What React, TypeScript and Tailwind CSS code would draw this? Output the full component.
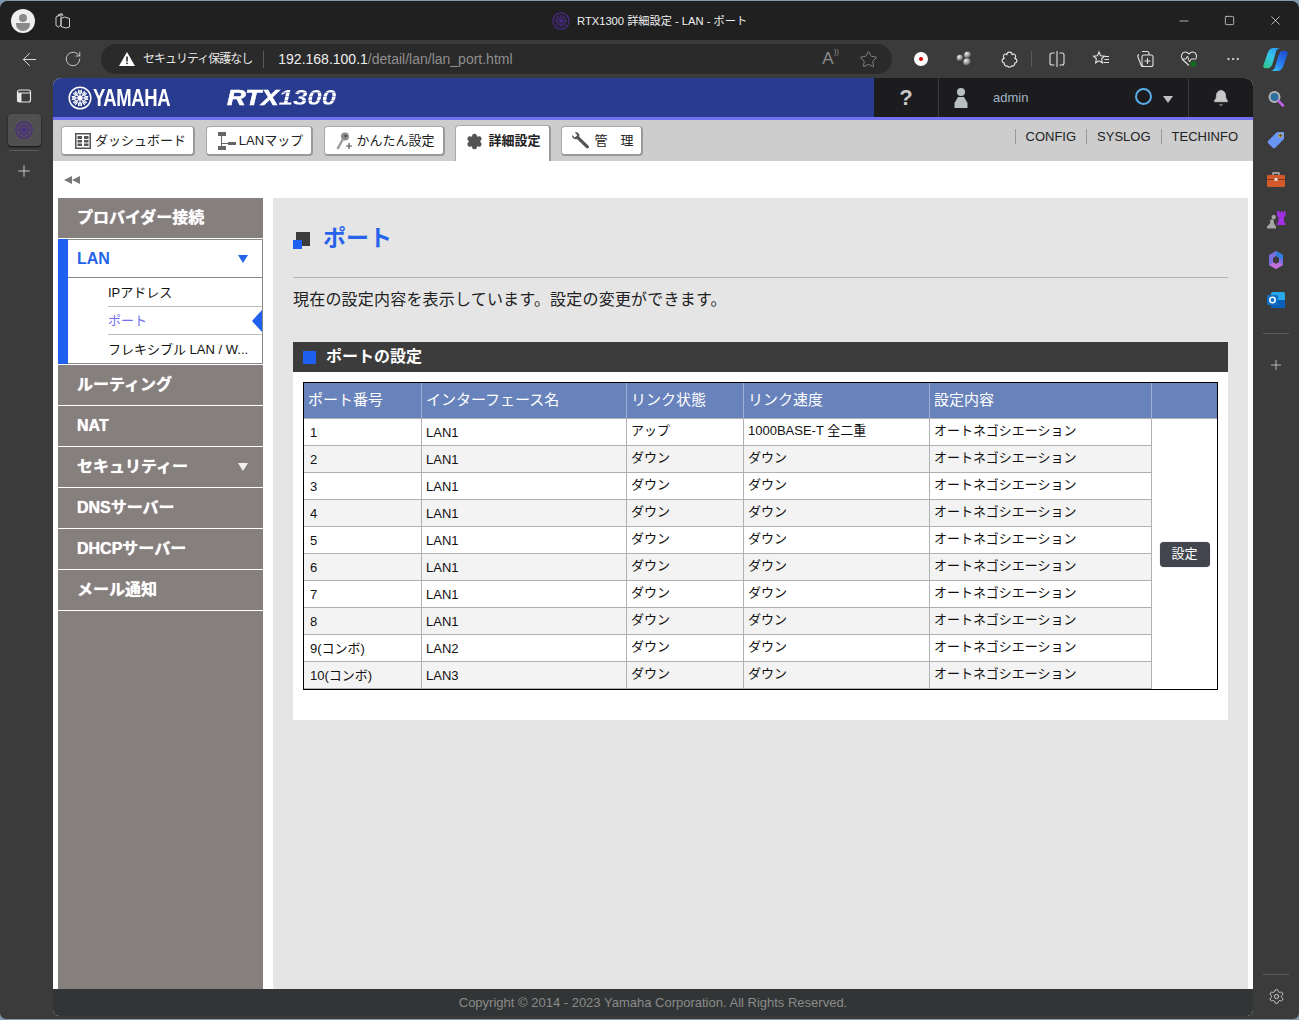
import React from "react";
import {
  ArrowLeft, RotateCw, Star, Plus, Minus, Square, X, MoreHorizontal, Settings, Bell,
} from "lucide-react";

const JP = "font-['Liberation_Sans','Noto_Sans_CJK_JP',sans-serif]";

function YamahaMark({ size = 24, color = "#fff" }: { size?: number; color?: string }) {
  const spokes = [0, 45, 90, 135, 180, 225, 270, 315];
  return (
    <svg width={size} height={size} viewBox="0 0 24 24" fill="none" className="shrink-0">
      <circle cx="12" cy="12" r="10.800" stroke={color} strokeWidth="1.500" />
      {spokes.map((a) => (
        <g key={a} transform={`rotate(${a} 12 12)`}>
          <path d="M12 10V4M10.600 3.800v2.600c0 .7.6 1.100 1.400 1.100s1.400-.4 1.400-1.100V3.800" stroke={color} strokeWidth="1.100" />
        </g>
      ))}
      <circle cx="12" cy="12" r="2.400" fill={color} />
    </svg>
  );
}

function NavButton({ icon, label, w, active }: { icon: React.ReactNode; label: string; w: string; active?: boolean }) {
  return (
    <div
      className={`${w} flex items-center justify-center gap-[3px] bg-white border border-[#a9a9a9] text-[13px] text-[#222] ${
        active
          ? "h-[36px] mt-[5px] pb-[5px] rounded-t-[4px] border-b-0 border-r-2 border-r-[#9a9a9a] font-bold"
          : "h-[30px] mt-[6px] rounded-[4px] border-r-2 border-b-2 border-r-[#9a9a9a] border-b-[#9a9a9a]"
      }`}
    >
      {icon}
      <span className="whitespace-pre">{label}</span>
    </div>
  );
}

function GridIcon() {
  return (
    <svg width="16" height="16" viewBox="0 0 16 16" fill="none" className="mr-[1px]">
      <rect x="0.750" y="0.750" width="14.500" height="14.500" stroke="#555" strokeWidth="1.500" fill="#fff" />
      <rect x="2.500" y="3" width="4.500" height="3" fill="#555" />
      <rect x="9" y="3" width="4.500" height="3" fill="#555" />
      <rect x="2.500" y="7" width="4.500" height="2.500" fill="#555" />
      <rect x="9" y="7" width="4.500" height="2.500" fill="#555" />
      <rect x="2.500" y="10.500" width="4.500" height="2.500" fill="#555" />
      <rect x="9" y="10.500" width="4.500" height="2.500" fill="#555" />
    </svg>
  );
}
function MapIcon() {
  return (
    <svg width="18" height="20" viewBox="0 0 18 20" fill="none">
      <rect x="0" y="1" width="8" height="4" fill="#666" />
      <rect x="0" y="15" width="8" height="4" fill="#666" />
      <rect x="10" y="11" width="8" height="3" fill="#666" />
      <path d="M3.500 5v10M3.500 12.500h6.500" stroke="#666" />
    </svg>
  );
}
function WandIcon() {
  return (
    <svg width="20" height="20" viewBox="0 0 20 20" fill="none" className="-mr-[2px]">
      <circle cx="10" cy="5.500" r="4" fill="#8a8a8a" />
      <circle cx="10.500" cy="5" r="1.200" fill="#444" />
      <path d="M8 8L2.500 18" stroke="#9a9a9a" strokeWidth="2.400" />
      <path d="M14 12v6M11 15h6" stroke="#555" strokeWidth="1.200" />
    </svg>
  );
}
function GearIcon() {
  return <Settings size={17} fill="#555" stroke="#555" strokeWidth={2.200} className="mr-[2px]" />;
}
function WrenchIcon() {
  return (
    <svg width="19" height="19" viewBox="0 0 18 18" fill="none" className="mr-[1px]">
      <path d="M1 3.800L3.600 6.200 6 4 3.600 1.400C5.600.4 8 1.800 8 4.200c0 .5 0 .8-.2 1.200L16.600 14c.6.7.6 1.600 0 2.200s-1.600.6-2.200 0L5.600 7.600C3.200 8.400.6 6.400 1 3.800z" fill="#555" />
    </svg>
  );
}

function SideItem({ label, caret }: { label: string; caret?: boolean }) {
  return (
    <div className="h-[41px] bg-[#857f7d] border-b border-white flex items-center pl-[19px] pr-[15px] text-white font-bold text-[16px] [text-shadow:0_0_1px_#fff]">
      <span className="flex-1">{label}</span>
      {caret && <span className="w-0 h-0 border-x-[5px] border-x-transparent border-t-[8px] border-t-[#f0f0f0]" />}
    </div>
  );
}

const rows: [string, string, string, string][] = [
  ["1", "LAN1", "アップ", "1000BASE-T 全二重"],
  ["2", "LAN1", "ダウン", "ダウン"],
  ["3", "LAN1", "ダウン", "ダウン"],
  ["4", "LAN1", "ダウン", "ダウン"],
  ["5", "LAN1", "ダウン", "ダウン"],
  ["6", "LAN1", "ダウン", "ダウン"],
  ["7", "LAN1", "ダウン", "ダウン"],
  ["8", "LAN1", "ダウン", "ダウン"],
  ["9(コンボ)", "LAN2", "ダウン", "ダウン"],
  ["10(コンボ)", "LAN3", "ダウン", "ダウン"],
];

function PortTable() {
  const th = "h-[36px] px-[4px] text-left font-normal text-[15px] text-white border-r border-b border-r-[#9fb0d4] border-b-[#b0b0b0] bg-[#6882bb]";
  const td = "h-[27px] p-0 pl-[4px] text-[13px] text-[#111] border-r border-b border-[#b0b0b0]";
  return (
    <div className="w-[915px] border border-black">
      <table className="w-[913px] border-separate border-spacing-0 table-fixed">
        <colgroup>
          <col className="w-[118px]" />
          <col className="w-[205px]" />
          <col className="w-[117px]" />
          <col className="w-[186px]" />
          <col className="w-[222px]" />
          <col />
        </colgroup>
        <thead>
          <tr>
            <th className={th}>ポート番号</th>
            <th className={th}>インターフェース名</th>
            <th className={th}>リンク状態</th>
            <th className={th}>リンク速度</th>
            <th className={th}>設定内容</th>
            <th className="bg-[#6882bb] border-b border-[#b0b0b0]" />
          </tr>
        </thead>
        <tbody>
          {rows.map((r, i) => (
            <tr key={i} className={i % 2 ? "bg-[#f3f3f3]" : "bg-white"}>
              <td className={td + " pl-[6px] pt-[2px]"}>{r[0]}</td>
              <td className={td + " pt-[2px]"}>{r[1]}</td>
              <td className={td + " pb-[2px]"}>{r[2]}</td>
              <td className={td + " pb-[2px]"}>{r[3]}</td>
              <td className={td + " pb-[2px]"}>オートネゴシエーション</td>
              {i === 0 && (
                <td rowSpan={10} className="bg-white text-center align-middle">
                  <button className="w-[50px] h-[25px] rounded-[4px] bg-[#42444e] text-white text-[13px] shadow-[0_0_1px_#888]">設定</button>
                </td>
              )}
            </tr>
          ))}
        </tbody>
      </table>
    </div>
  );
}

function CopilotLogo() {
  const ribbon = "M10.500 1h6.500c-2.200 0-3.800 1.300-4.500 3.500L9 16.500C8.200 19 6.500 20.500 4 20.500H2.800C1 20.500-.2 19 .4 17.200L4.800 5C5.700 2.500 7.800 1 10.500 1z";
  return (
    <svg width="25" height="25" viewBox="0 0 24 24">
      <defs>
        <linearGradient id="cpA" x1="0.8" y1="0" x2="0.2" y2="1"><stop offset="0" stopColor="#2a9df4" /><stop offset="0.5" stopColor="#35c8e8" /><stop offset="1" stopColor="#2fc48a" /></linearGradient>
        <linearGradient id="cpB" x1="0.2" y1="1" x2="0.8" y2="0"><stop offset="0" stopColor="#1d4fd0" /><stop offset="0.6" stopColor="#2a7ff0" /><stop offset="1" stopColor="#38c6f5" /></linearGradient>
      </defs>
      <path d={ribbon} fill="url(#cpA)" />
      <path d={ribbon} fill="url(#cpB)" transform="rotate(180 12 12)" />
    </svg>
  );
}

function Slot({ children, className = "w-[44px]" }: { children: React.ReactNode; className?: string }) {
  return <div className={`${className} shrink-0 flex items-center justify-center`}>{children}</div>;
}

export default function App() {
  return (
    <div className={`${JP} w-[1299px] h-[1020px] bg-[#7f98b0] overflow-hidden`}>
      <div className="w-[1299px] h-[1018px] mt-px rounded-t-[8px] rounded-b-[6px] overflow-hidden bg-[#3b3b3b] flex flex-col">
        {/* title bar */}
        <div className="h-[39px] bg-[#202020] flex items-center relative shrink-0">
          <div className="ml-[11px] w-[24px] h-[24px] rounded-full bg-[#eeeeee] overflow-hidden flex flex-col items-center">
            <span className="w-[8px] h-[8px] mt-[5px] rounded-full bg-[#8a8a8a]" />
            <span className="w-[14px] h-[8px] mt-[1px] rounded-b-[7px] bg-[#8a8a8a]" />
          </div>
          <svg width="18" height="18" viewBox="0 0 18 18" fill="none" stroke="#cfcfcf" strokeWidth="1" className="ml-[19px]">
            <path d="M4 4.500V3l4-1.500 1 2.500" />
            <path d="M2 5l5-2.500v10.500l-2.500 2-2.500-1.500z" />
            <path d="M7 6.500l3.500-1.500 5 1.500v8.500l-3.500 1-5-1.500z" />
          </svg>
          <div className="absolute left-[552px] top-[11px] flex items-center gap-[7px] text-[11.200px] text-[#f0f0f0]">
            <YamahaMark size={18} color="#4a2a8a" />
            <span>RTX1300 詳細設定 - LAN - ポート</span>
          </div>
          <div className="ml-auto flex items-center text-[#f0f0f0]">
            <Minus size={14} strokeWidth={1.200} className="mr-[33px]" />
            <Square size={11} strokeWidth={1.500} className="mr-[33px]" />
            <X size={15} strokeWidth={1.200} className="mr-[16px]" />
          </div>
        </div>

        {/* toolbar */}
        <div className="h-[38px] bg-[#3b3b3b] flex items-center shrink-0 text-[#e2e2e2]">
          <ArrowLeft size={21} strokeWidth={1.100} className="ml-[19px]" />
          <RotateCw size={18} strokeWidth={1.100} className="ml-[24px]" />
          <div className="ml-[19px] w-[791px] h-[30px] rounded-full bg-[#2a2a2a] flex items-center pl-[17px] shrink-0">
            <svg width="18" height="16" viewBox="0 0 18 16" className="shrink-0">
              <path d="M9 1L17 15H1z" fill="#fff" />
              <rect x="8.200" y="5.500" width="1.600" height="5" fill="#2a2a2a" />
              <rect x="8.200" y="11.500" width="1.600" height="1.600" fill="#2a2a2a" />
            </svg>
            <span className="ml-[7px] text-[12px] tracking-[-1px] text-[#e6e6e6]">セキュリティ保護なし</span>
            <span className="ml-[11px] w-px h-[17px] bg-[#5a5a5a]" />
            <span className="ml-[14px] text-[14px] text-[#f0f0f0]">192.168.100.1<span className="text-[#8f8f8f]">/detail/lan/lan_port.html</span></span>
            <span className="ml-auto text-[#8a8a8a] text-[17px] font-light">A<span className="text-[8px] align-top">))</span></span>
            <Star size={19} strokeWidth={1} className="ml-[20px] mr-[14px] text-[#9a9a9a]" />
          </div>
          <div className="ml-[7px] flex items-center">
            <Slot><span className="w-[14px] h-[14px] rounded-full bg-white flex items-center justify-center"><span className="w-[4px] h-[4px] rounded-full bg-[#e00000]" /></span></Slot>
            <Slot>
              <svg width="18" height="18" viewBox="0 0 18 18">
                <defs>
                  <radialGradient id="ball" cx="0.35" cy="0.3" r="0.8"><stop offset="0" stopColor="#f0f0f0" /><stop offset="0.6" stopColor="#888" /><stop offset="1" stopColor="#222" /></radialGradient>
                </defs>
                <circle cx="4" cy="8" r="3.300" fill="url(#ball)" />
                <circle cx="11.500" cy="5" r="3.500" fill="url(#ball)" />
                <circle cx="11" cy="12" r="3.800" fill="url(#ball)" />
              </svg>
            </Slot>
            <Slot>
              <svg width="19" height="19" viewBox="0 0 18 18" fill="none" stroke="#e2e2e2" strokeWidth="1.100">
                <path d="M9 2c1.500 0 2.500 1 2.500 2.200 1-.6 3.300-.3 3.300 1.800 0 .8-.3 1.300-.8 1.700C15.200 8.200 16 9 16 10.200s-.9 2-2 2.200c.2 2-1.500 3.200-3 2.800-.5.8-1.200 1-2 1s-1.500-.3-2-1c-1.500.4-3.200-.8-3-2.800-1.100-.2-2-1-2-2.200S2.800 8.200 4 7.700C3.500 7.300 3.200 6.800 3.200 6c0-2.100 2.300-2.400 3.300-1.800C6.500 3 7.500 2 9 2z" />
              </svg>
            </Slot>
            <span className="w-px h-[16px] bg-[#5a5a5a] mr-[3px]" />
            <Slot>
              <svg width="18" height="18" viewBox="0 0 18 18" fill="none" stroke="#e2e2e2" strokeWidth="1.100">
                <path d="M6.500 3H4a2 2 0 00-2 2v8a2 2 0 002 2h2.500M11.500 3H14a2 2 0 012 2v8a2 2 0 01-2 2h-2.500M9 1v16" />
              </svg>
            </Slot>
            <Slot>
              <svg width="18" height="18" viewBox="0 0 18 18" fill="none" stroke="#e2e2e2" strokeWidth="1.100">
                <path d="M7 2l1.600 3.700 3.900.4-2.900 2.700.8 4L7 10.800 3.600 12.800l.8-4L1.500 6.100l3.900-.4z" />
                <path d="M12.500 6.500H17M12.500 9.500H17M11.500 12.500H17" />
              </svg>
            </Slot>
            <Slot>
              <svg width="18" height="18" viewBox="0 0 18 18" fill="none" stroke="#e2e2e2" strokeWidth="1.100">
                <path d="M6 1.500h5a2 2 0 012 2V5M3 4.500C2 5 1.500 6 2 7l3 8c.3 1 1 1.500 2 1.500" />
                <rect x="6" y="5" width="11" height="11.500" rx="2" />
                <path d="M11.500 8v6M8.500 11h6" />
              </svg>
            </Slot>
            <Slot>
              <svg width="18" height="18" viewBox="0 0 18 18" fill="none">
                <path d="M9 15.500L2.500 9.500C0 6.500 2 2 5.500 2 7 2 8.200 3 9 4c.8-1 2-2 3.500-2C16 2 18 6.500 15.500 9.500" stroke="#e2e2e2" strokeWidth="1.100" />
                <path d="M2 9h4l1.500-3 2 6 1.500-3h4" stroke="#e2e2e2" strokeWidth="1" />
                <circle cx="13.500" cy="14" r="3" fill="#0f6b1f" />
              </svg>
            </Slot>
            <Slot><MoreHorizontal size={16} strokeWidth={1.500} /></Slot>
            <Slot className="w-[40px]"><CopilotLogo /></Slot>
          </div>
        </div>

        {/* body */}
        <div className="flex-1 flex min-h-0">
          {/* left rail */}
          <div className="w-[53px] shrink-0 flex flex-col items-center text-[#e6e6e6]">
            <svg width="16" height="16" viewBox="0 0 16 16" fill="none" stroke="#e6e6e6" strokeWidth="1.200" className="mt-[10px] -ml-[5px]">
              <rect x="1.500" y="2" width="13" height="12" rx="2" />
              <path d="M1.500 5h13" />
              <rect x="1.500" y="5" width="4" height="9" fill="#e6e6e6" stroke="none" />
            </svg>
            <div className="mt-[10px] -ml-[5px] w-[33px] h-[32px] rounded-[4px] bg-[#505050] shadow-[0_1px_2px_#111] flex items-center justify-center">
              <YamahaMark size={18} color="#4a2a8a" />
            </div>
            <div className="mt-[4px] -ml-[5px] w-[30px] h-px bg-[#5a5a5a]" />
            <Plus size={18} strokeWidth={1.100} className="mt-[11px] -ml-[5px]" />
          </div>

          {/* page */}
          <div className="w-[1200px] shrink-0 flex flex-col mb-[3px] rounded-t-[8px] rounded-b-[6px] overflow-hidden bg-white">
            {/* header */}
            <div className="h-[39px] shrink-0 flex">
              <div className="w-[821px] bg-[#283b8f] flex items-center pl-[15px]">
                <YamahaMark size={24} />
                <span className="ml-[1px] text-white font-bold text-[24px] tracking-[-0.5px] scale-x-[0.77] origin-left">YAMAHA</span>
                <span className="ml-[34px] font-bold italic text-[22px] whitespace-pre scale-x-[1.180] origin-left">
                  <span className="text-white [-webkit-text-stroke:0.6px_#fff]">RTX</span>
                  <span className="text-transparent bg-clip-text bg-[repeating-linear-gradient(180deg,#fff_0_3px,#aab4dc_3px_4px)]">1300</span>
                </span>
              </div>
              <div className="flex-1 bg-[#1c1c1e] flex items-stretch text-[#bbc3c9]">
                <div className="w-[65px] flex items-center justify-center text-[22px] font-bold border-r border-[#3a3a3a] text-[#c8c8c8]">?</div>
                <div className="w-[250px] flex items-center border-r border-[#3a3a3a]">
                  <svg width="14" height="22" viewBox="0 0 14 22" className="ml-[15px]">
                    <circle cx="7" cy="5" r="4" fill="#b8bec2" />
                    <path d="M4 10h6l3.500 6v5H.5v-5z" fill="#b8bec2" />
                  </svg>
                  <span className="ml-[25px] text-[13px] text-[#a3b6c8]">admin</span>
                  <span className="ml-auto w-[17px] h-[17px] mb-[3px] rounded-full border-2 border-[#58aee8]" />
                  <span className="ml-[11px] mr-[15px] mt-[3px] w-0 h-0 border-x-[5px] border-x-transparent border-t-[7px] border-t-[#bcc0c2]" />
                </div>
                <div className="flex-1 flex items-center justify-center pr-[1px]"><Bell size={18} fill="#c8c8c8" strokeWidth={1} /></div>
              </div>
            </div>
            <div className="h-[3px] shrink-0 bg-[#7070f0]" />
            {/* nav */}
            <div className="h-[41px] shrink-0 bg-[#cdcdcd] flex items-start pl-[8px] text-[#222]">
              <NavButton w="w-[134px] mr-[11px] pl-[6px]" icon={<GridIcon />} label="ダッシュボード" />
              <NavButton w="w-[107px] mr-[11px] pl-[3px]" icon={<MapIcon />} label="LANマップ" />
              <NavButton w="w-[121px] mr-[10px] pl-[2px]" icon={<WandIcon />} label="かんたん設定" />
              <NavButton w="w-[96px] mr-[10px] pl-[2px]" active icon={<GearIcon />} label="詳細設定" />
              <NavButton w="w-[82px] pl-[2px]" icon={<WrenchIcon />} label="管　理" />
              <div className="ml-auto mt-[9px] mr-[15px] flex items-center text-[13px] text-[#222] font-['Liberation_Sans',sans-serif]">
                <span className="border-l border-[#999] pl-[10px] pr-[10px] h-[15px] leading-[15px]">CONFIG</span>
                <span className="border-l border-[#999] pl-[10px] pr-[10px] h-[15px] leading-[15px]">SYSLOG</span>
                <span className="border-l border-[#999] pl-[10px] h-[15px] leading-[15px]">TECHINFO</span>
              </div>
            </div>
            {/* main */}
            <div className="flex-1 flex flex-col min-h-0">
              <div className="h-[37px] shrink-0 pl-[11px] flex items-center">
                <span className="w-0 h-0 border-y-[4px] border-y-transparent border-r-[8px] border-r-[#777]" />
                <span className="w-0 h-0 border-y-[4px] border-y-transparent border-r-[8px] border-r-[#777]" />
              </div>
              <div className="flex-1 flex min-h-0 pl-[5px] pr-[5px]">
                {/* sidebar */}
                <div className="w-[205px] bg-[#857f7d] shrink-0">
                  <SideItem label="プロバイダー接続" />
                  <div className="bg-white border-l-[10px] border-[#2060f0]">
                    <div className="h-[39px] border-t border-b border-r border-[#888] flex items-center pl-[9px] pr-[14px] font-bold text-[16px] text-[#2563eb]">
                      <span className="flex-1">LAN</span>
                      <span className="w-0 h-0 border-x-[5px] border-x-transparent border-t-[8px] border-t-[#2563eb]" />
                    </div>
                    <div className="pl-[40px] border-r border-b border-[#888] text-[13px]">
                      <div className="h-[29px] pt-px border-b border-[#bbb] flex items-center text-[#111]">IPアドレス</div>
                      <div className="h-[28px] pt-px border-b border-[#bbb] flex items-center text-[#6f6ff0] relative">
                        ポート
                        <span className="absolute right-0 top-[3px] w-0 h-0 border-y-[11px] border-y-transparent border-r-[10px] border-r-[#2060f0]" />
                      </div>
                      <div className="h-[28px] pt-px flex items-center text-[#111] truncate">フレキシブル LAN / W...</div>
                    </div>
                  </div>
                  <div className="h-px bg-white" />
                  <SideItem label="ルーティング" />
                  <SideItem label="NAT" />
                  <SideItem label="セキュリティー" caret />
                  <SideItem label="DNSサーバー" />
                  <SideItem label="DHCPサーバー" />
                  <SideItem label="メール通知" />
                </div>
                {/* content */}
                <div className="ml-[10px] flex-1 bg-[#e5e5e5] px-[20px]">
                  <div className="h-[80px] border-b border-[#b5b5b5] flex items-center pt-[2px]">
                    <span className="relative w-[17px] h-[17px] mt-[4px]">
                      <span className="absolute right-0 top-0 w-[14px] h-[14px] bg-[#3c3c3c]" />
                      <span className="absolute left-0 bottom-0 w-[9px] h-[9px] bg-[#2060f0]" />
                    </span>
                    <span className="ml-[13px] text-[23px] font-bold text-[#2563eb]">ポート</span>
                  </div>
                  <p className="h-[64px] pt-[10px] text-[16px] tracking-[0.200px] text-[#222]">現在の設定内容を表示しています。設定の変更ができます。</p>
                  <div className="h-[30px] bg-[#3c3c3c] flex items-center pl-[10px] text-white font-bold text-[16px]">
                    <span className="w-[13px] h-[13px] bg-[#2060f0] mr-[10px]" />
                    ポートの設定
                  </div>
                  <div className="bg-white p-[10px] pb-[30px]">
                    <PortTable />
                  </div>
                </div>
              </div>
              {/* footer */}
              <div className="h-[27px] shrink-0 bg-[#323535] flex items-center justify-center text-[13px] text-[#8b8b8b] font-['Liberation_Sans',sans-serif]">
                Copyright © 2014 - 2023 Yamaha Corporation. All Rights Reserved.
              </div>
            </div>
          </div>

          {/* right rail */}
          <div className="flex-1 flex flex-col items-center">
            <svg width="20" height="20" viewBox="0 0 20 20" fill="none" className="mt-[11px]">
              <circle cx="8.500" cy="8" r="5" stroke="#b5b5b5" strokeWidth="2" fill="#2e6f9e" />
              <path d="M12.500 12l4.500 4.500" stroke="#c060e8" strokeWidth="2.500" strokeLinecap="round" />
            </svg>
            <svg width="20" height="20" viewBox="0 0 20 20" className="mt-[21px]">
              <path d="M11 2h7v7l-9 9a1.500 1.500 0 01-2 0L2 13a1.500 1.500 0 010-2z" fill="#6a95f5" />
              <circle cx="14.500" cy="5.500" r="1.700" fill="#3a3a3a" stroke="#f0c020" />
            </svg>
            <svg width="20" height="18" viewBox="0 0 20 18" className="mt-[21px]">
              <path d="M7 4V2h6v2" stroke="#bbb" strokeWidth="1.300" fill="none" />
              <rect x="1" y="4" width="18" height="12" rx="1" fill="#d25a2a" />
              <rect x="1" y="8" width="18" height="1" fill="#8a3a18" />
              <rect x="8.500" y="7" width="3" height="3" fill="#ddd" />
            </svg>
            <svg width="20" height="20" viewBox="0 0 20 20" className="mt-[21px]">
              <path d="M5.500 7a2.200 2.200 0 110 .1zM4.500 9.500h3l.5 4 2 3v2H1v-2l3-3z" fill="#a5a5a5" />
              <path d="M12 1h1.500v1.500H15V1h1.500v1.500H18V1h1.500v5l-1.500 1v5l1.500 1v2H11v-2l1.500-1V7L11 6V1z" fill="#a030e0" />
            </svg>
            <svg width="20" height="20" viewBox="0 0 20 20" className="mt-[20px]">
              <path d="M10 1l7 4v10l-7 4-7-4V5z" fill="#7a6fdc" />
              <path d="M10 1l7 4v5l-7-4z" fill="#2f7fe0" />
              <path d="M3 15l7 4 7-4-7-4z" fill="#c070d8" />
              <path d="M7 8l3-2 3 2v4l-3 2-3-2z" fill="#3b3b3b" />
            </svg>
            <svg width="20" height="20" viewBox="0 0 20 20" className="mt-[20px]">
              <rect x="5" y="2" width="14" height="16" rx="1.500" fill="#28a8ea" />
              <rect x="5" y="10" width="14" height="8" fill="#0a60b8" />
              <rect x="1" y="5" width="11" height="10" rx="1" fill="#0f6fc6" />
              <circle cx="6.500" cy="10" r="2.700" fill="none" stroke="#fff" strokeWidth="1.500" />
            </svg>
            <div className="mt-[23px] w-[26px] h-px bg-[#5c5c5c]" />
            <Plus size={16} strokeWidth={1.100} className="mt-[23px] text-[#e0e0e0]" />
            <div className="mt-auto w-[26px] h-px bg-[#5c5c5c]" />
            <Settings size={17} strokeWidth={1.200} className="mt-[13px] mb-[14px] text-[#e0e0e0]" />
          </div>
        </div>
      </div>
    </div>
  );
}
